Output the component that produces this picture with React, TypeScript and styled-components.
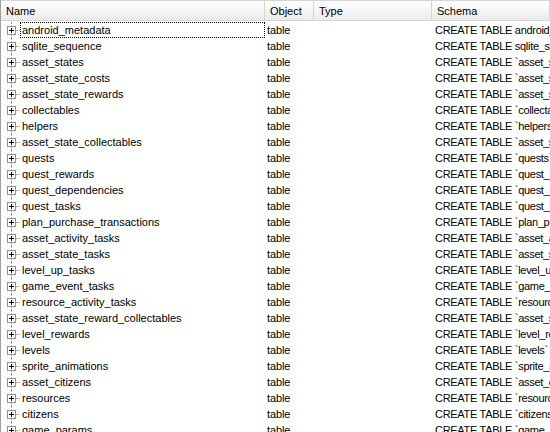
import React from "react";
import styled, { createGlobalStyle } from "styled-components";

const tables = [
    "android_metadata",
    "sqlite_sequence",
    "asset_states",
    "asset_state_costs",
    "asset_state_rewards",
    "collectables",
    "helpers",
    "asset_state_collectables",
    "quests",
    "quest_rewards",
    "quest_dependencies",
    "quest_tasks",
    "plan_purchase_transactions",
    "asset_activity_tasks",
    "asset_state_tasks",
    "level_up_tasks",
    "game_event_tasks",
    "resource_activity_tasks",
    "asset_state_reward_collectables",
    "level_rewards",
    "levels",
    "sprite_animations",
    "asset_citizens",
    "resources",
    "citizens",
    "game_params",
];

// first two are created without backticks
const schemaFor = (name: string, i: number) =>
    i < 2 ? `CREATE TABLE ${name} (` : `CREATE TABLE \`${name}\` (`;

const Global = createGlobalStyle`
    html, body {
        margin: 0;
        padding: 0;
        background: #ffffff;
        overflow: hidden;
    }
`;

const Container = styled.div`
    width: 550px;
    height: 432px;
    overflow: hidden;
    font-family: "Liberation Sans", Arial, sans-serif;
    font-size: 11px;
    color: #000000;
    background: #ffffff;
    border-left: 1px solid #a0a0a0;
    box-sizing: border-box;
`;

const Header = styled.div`
    display: grid;
    grid-template-columns: 264px 49px 118px 1fr;
    height: 21px;
    background: linear-gradient(#ffffff, #f3f3f3 60%, #ebebeb);
    border-top: 1px solid #d5d5d5;
    border-bottom: 1px solid #d5d5d5;
    box-sizing: border-box;
`;

const HeaderCell = styled.div`
    display: flex;
    align-items: center;
    padding-left: 5px;
    border-right: 1px solid #d5d5d5;
    white-space: nowrap;
    overflow: hidden;
`;

const Body = styled.div`
    display: flex;
    flex-direction: column;
    padding-top: 1px;
`;

const Row = styled.div`
    display: grid;
    grid-template-columns: 264px 49px 118px 1fr;
    height: 16px;
`;

const TreeCell = styled.div`
    display: flex;
    align-items: center;
    position: relative;
    padding-left: 19px;
    min-width: 0;
`;

const VLine = styled.span`
    position: absolute;
    left: 10px;
    top: 0;
    bottom: 0;
    border-left: 1px dotted #a0a0a0;
`;

const HLine = styled.span`
    position: absolute;
    left: 15px;
    top: 8px;
    width: 4px;
    border-top: 1px dotted #a0a0a0;
`;

const PlusBox = styled.span`
    position: absolute;
    left: 6px;
    top: 4px;
    width: 9px;
    height: 9px;
    box-sizing: border-box;
    border: 1px solid #919191;
    background: #ffffff;

    &::before,
    &::after {
        content: "";
        position: absolute;
        background: #000000;
    }
    &::before {
        left: 1px;
        top: 3px;
        width: 5px;
        height: 1px;
    }
    &::after {
        left: 3px;
        top: 1px;
        width: 1px;
        height: 5px;
    }
`;

const Label = styled.span<{ $focused?: boolean }>`
    flex: 1;
    height: 16px;
    box-sizing: border-box;
    display: flex;
    align-items: center;
    padding-left: 1px;
    border: 1px dotted ${(p) => (p.$focused ? "#000000" : "transparent")};
    white-space: nowrap;
    overflow: hidden;
`;

const Cell = styled.div<{ $pad?: number; $tight?: boolean }>`
    display: flex;
    align-items: center;
    padding-left: ${(p) => p.$pad ?? 2}px;
    white-space: nowrap;
    overflow: hidden;
    letter-spacing: ${(p) => (p.$tight ? "-0.3px" : "-0.1px")};
`;

export default function App() {
    return (
        <>
            <Global />
            <Container>
                <Header>
                    <HeaderCell>Name</HeaderCell>
                    <HeaderCell>Object</HeaderCell>
                    <HeaderCell>Type</HeaderCell>
                    <HeaderCell>Schema</HeaderCell>
                </Header>
                <Body>
                    {tables.map((t, i) => (
                        <Row key={t}>
                            <TreeCell>
                                <VLine />
                                <HLine />
                                <PlusBox />
                                <Label $focused={i === 0}>{t}</Label>
                            </TreeCell>
                            <Cell>table</Cell>
                            <Cell></Cell>
                            <Cell $pad={3} $tight>
                                {schemaFor(t, i)}
                            </Cell>
                        </Row>
                    ))}
                </Body>
            </Container>
        </>
    );
}
